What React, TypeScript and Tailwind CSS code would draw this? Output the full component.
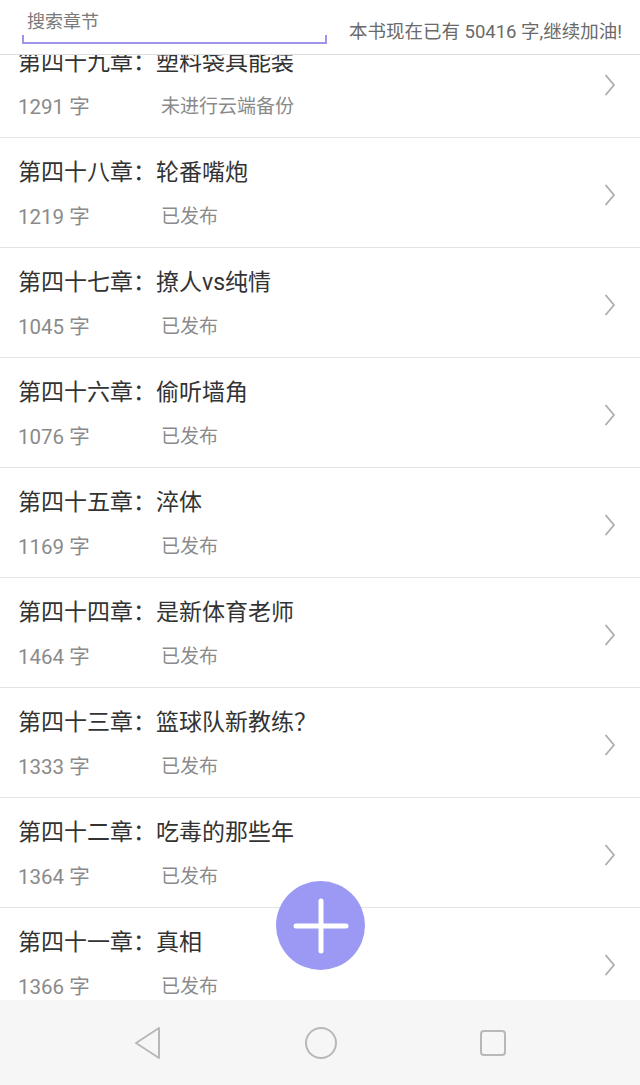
const chapters = [
  { title: "第四十九章：塑料袋具能装", words: 1291, status: "未进行云端备份" },
  { title: "第四十八章：轮番嘴炮", words: 1219, status: "已发布" },
  { title: "第四十七章：撩人vs纯情", words: 1045, status: "已发布" },
  { title: "第四十六章：偷听墙角", words: 1076, status: "已发布" },
  { title: "第四十五章：淬体", words: 1169, status: "已发布" },
  { title: "第四十四章：是新体育老师", words: 1464, status: "已发布" },
  { title: "第四十三章：篮球队新教练？", words: 1333, status: "已发布" },
  { title: "第四十二章：吃毒的那些年", words: 1364, status: "已发布" },
  { title: "第四十一章：真相", words: 1366, status: "已发布" },
];

const font = { fontFamily: 'Roboto, "Noto Sans CJK SC", sans-serif' };

const ChapterRow = ({ title, words, status }: { title: string; words: number; status: string }) => (
  <div className="h-[110px] shrink-0 border-b border-[#e4e4e4] flex items-center justify-between pl-[18px] pr-[24px]">
    <div className="flex flex-col">
      <div className="text-[23px] leading-[30px] text-[#333] mt-[2px]">{title}</div>
      <div className="flex text-[20.5px] leading-[26px] text-[#8a8a8a] mt-[16px]">
        <span className="w-[143px]">{words} 字</span>
        <span className="text-[19px]">{status}</span>
      </div>
    </div>
    <svg className="w-[12px] h-[22px] mt-[4px]" viewBox="0 0 12 22" fill="none" stroke="#ababab" strokeWidth={1.8} strokeLinecap="round" strokeLinejoin="round">
      <path d="M2 1.5l8 9.5-8 9.5" />
    </svg>
  </div>
);

export default function App() {
  return (
    <div className="w-[640px] h-[1085px] flex flex-col bg-white overflow-hidden" style={font}>
      <div className="relative h-[1000px] overflow-hidden">
        <div className="flex flex-col mt-[28px]">
          {chapters.map((c) => (
            <ChapterRow key={c.title} {...c} />
          ))}
        </div>

        <div className="absolute top-0 left-0 right-0 h-[55px] bg-white border-b border-[#dcdcdc] flex items-start pl-[22px] pr-[18px]">
          <div className="relative w-[305px] h-[44px] border-b-2 border-[#9d95ea]">
            <span className="absolute left-0 bottom-0 w-[2px] h-[7px] bg-[#9d95ea]" />
            <span className="absolute right-0 bottom-0 w-[2px] h-[7px] bg-[#9d95ea]" />
            <span className="absolute left-[5px] top-[11px] text-[18px] leading-[22px] text-[#7a7a7a]">搜索章节</span>
          </div>
          <div className="ml-auto mt-[20px] text-[18.5px] leading-[24px] text-[#6a6a6a] whitespace-nowrap">
            本书现在已有 50416 字,继续加油!
          </div>
        </div>

        <div className="absolute left-[276px] top-[881px] w-[89px] h-[89px] rounded-full bg-[#9c99f5] flex items-center justify-center">
          <svg className="w-[56px] h-[56px]" viewBox="0 0 56 56" stroke="white" strokeWidth={5} strokeLinecap="round">
            <path d="M28 3v50M3 28h50" />
          </svg>
        </div>
      </div>

      <div className="h-[85px] bg-[#f6f6f6] flex items-center justify-center gap-[140px]">
        <svg className="w-[32px] h-[34px]" viewBox="0 0 32 34" fill="none" stroke="#b8b8b8" strokeWidth={2} strokeLinejoin="round">
          <path d="M27 2L4 17l23 15z" />
        </svg>
        <svg className="w-[34px] h-[34px]" viewBox="0 0 34 34" fill="none" stroke="#b8b8b8" strokeWidth={2}>
          <circle cx="17" cy="17" r="15" />
        </svg>
        <svg className="w-[30px] h-[30px]" viewBox="0 0 30 30" fill="none" stroke="#b8b8b8" strokeWidth={2}>
          <rect x="3" y="3" width="24" height="24" rx="3" />
        </svg>
      </div>
    </div>
  );
}
